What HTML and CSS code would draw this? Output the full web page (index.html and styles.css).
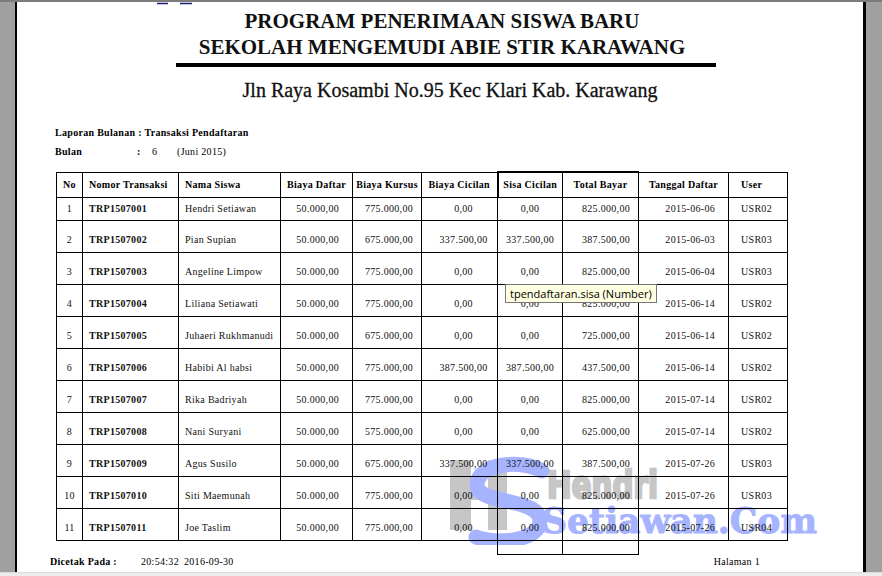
FILE: index.html
```html
<!DOCTYPE html>
<html lang="id">
<head>
<meta charset="utf-8">
<title>Laporan Bulanan Transaksi Pendaftaran</title>
<link rel="stylesheet" href="styles.css">
</head>
<body>
<div class="viewer">
  <div class="strip strip-left"></div>
  <main class="page">
    <svg class="logo-cut" width="40" height="3" viewBox="0 0 40 3"><path d="M0 1.5 H11 M23 1.5 H35" stroke="#1c1c7a" stroke-width="1.6"/></svg>
    <header class="head">
      <h1 class="title"><span class="title-line">PROGRAM PENERIMAAN SISWA BARU</span><span class="title-line">SEKOLAH MENGEMUDI ABIE STIR KARAWANG</span></h1>
      <div class="rule"></div>
      <p class="addr">Jln Raya Kosambi No.95 Kec Klari Kab. Karawang</p>
    </header>
    <section class="meta">
      <div class="meta-line bold">Laporan Bulanan : Transaksi Pendaftaran</div>
      <div class="meta-line"><span class="m-label bold">Bulan</span><span class="m-colon bold">:</span><span class="m-val">6</span><span class="m-note">(Juni 2015)</span></div>
    </section>
    <div class="table-wrap">
      <svg class="watermark" width="380" height="90" viewBox="0 0 380 90">
        <rect x="4" y="5" width="21" height="70" fill="#c6c6c6"/>
        <rect x="42" y="5" width="19" height="70" fill="#c6c6c6"/>
        <rect x="25" y="33" width="17" height="12" fill="#c6c6c6"/>
        <text x="101" y="43" class="wm-hendri" textLength="111" lengthAdjust="spacingAndGlyphs">Hendri</text>
        <path d="M96 16 C76 4 31 8 31 30 C31 50 94 42 94 66 C94 86 50 90 30 82" fill="none" stroke="#a6b4ff" stroke-width="15" stroke-linecap="round"/>
        <text x="96" y="78" class="wm-setia" textLength="275" lengthAdjust="spacingAndGlyphs">Setiawan.Com</text>
      </svg>
      <table class="report">
        <colgroup>
          <col class="w26"><col class="w96"><col class="w102"><col class="w72"><col class="w69"><col class="w76"><col class="w65"><col class="w76"><col class="w90"><col class="w59">
        </colgroup>
        <thead>
          <tr><th>No</th><th>Nomor Transaksi</th><th>Nama Siswa</th><th>Biaya Daftar</th><th>Biaya Kursus</th><th>Biaya Cicilan</th><th class="sel sel-left">Sisa Cicilan</th><th class="sel">Total Bayar</th><th>Tanggal Daftar</th><th>User</th></tr>
        </thead>
        <tbody>
          <tr class="first"><td>1</td><td>TRP1507001</td><td>Hendri Setiawan</td><td>50.000,00</td><td>775.000,00</td><td>0,00</td><td>0,00</td><td>825.000,00</td><td>2015-06-06</td><td>USR02</td></tr>
          <tr><td>2</td><td>TRP1507002</td><td>Pian Supian</td><td>50.000,00</td><td>675.000,00</td><td>337.500,00</td><td>337.500,00</td><td>387.500,00</td><td>2015-06-03</td><td>USR03</td></tr>
          <tr><td>3</td><td>TRP1507003</td><td>Angeline Limpow</td><td>50.000,00</td><td>775.000,00</td><td>0,00</td><td>0,00</td><td>825.000,00</td><td>2015-06-04</td><td>USR03</td></tr>
          <tr><td>4</td><td>TRP1507004</td><td>Liliana Setiawati</td><td>50.000,00</td><td>775.000,00</td><td>0,00</td><td>0,00</td><td>825.000,00</td><td>2015-06-14</td><td>USR02</td></tr>
          <tr><td>5</td><td>TRP1507005</td><td>Juhaeri Rukhmanudi</td><td>50.000,00</td><td>675.000,00</td><td>0,00</td><td>0,00</td><td>725.000,00</td><td>2015-06-14</td><td>USR02</td></tr>
          <tr><td>6</td><td>TRP1507006</td><td>Habibi Al habsi</td><td>50.000,00</td><td>775.000,00</td><td>387.500,00</td><td>387.500,00</td><td>437.500,00</td><td>2015-06-14</td><td>USR02</td></tr>
          <tr><td>7</td><td>TRP1507007</td><td>Rika Badriyah</td><td>50.000,00</td><td>775.000,00</td><td>0,00</td><td>0,00</td><td>825.000,00</td><td>2015-07-14</td><td>USR02</td></tr>
          <tr><td>8</td><td>TRP1507008</td><td>Nani Suryani</td><td>50.000,00</td><td>575.000,00</td><td>0,00</td><td>0,00</td><td>625.000,00</td><td>2015-07-14</td><td>USR02</td></tr>
          <tr><td>9</td><td>TRP1507009</td><td>Agus Susilo</td><td>50.000,00</td><td>675.000,00</td><td>337.500,00</td><td>337.500,00</td><td>387.500,00</td><td>2015-07-26</td><td>USR03</td></tr>
          <tr><td>10</td><td>TRP1507010</td><td>Siti Maemunah</td><td>50.000,00</td><td>775.000,00</td><td>0,00</td><td>0,00</td><td>825.000,00</td><td>2015-07-26</td><td>USR03</td></tr>
          <tr><td>11</td><td>TRP1507011</td><td>Joe Taslim</td><td>50.000,00</td><td>775.000,00</td><td>0,00</td><td>0,00</td><td>825.000,00</td><td>2015-07-26</td><td>USR04</td></tr>
          <tr class="sel-foot"><td></td><td></td><td></td><td></td><td></td><td></td><td></td><td></td><td></td><td></td></tr>
        </tbody>
      </table>
      <div class="tooltip">tpendaftaran.sisa (Number)</div>
    </div>
    <footer class="foot">
      <span class="f-label bold">Dicetak Pada :</span>
      <span class="f-time">20:54:32</span>
      <span class="f-date">2016-09-30</span>
      <span class="f-page">Halaman 1</span>
    </footer>
  </main>
  <div class="strip strip-right"></div>
</div>
<div class="statusbar"></div>
</body>
</html>
```

FILE: styles.css
```css
html, body {
  margin: 0;
  padding: 0;
}
body {
  width: 882px;
  height: 576px;
  overflow: hidden;
  background: #ffffff;
  font-family: "Liberation Serif", "Times New Roman", serif;
  color: #000;
}
.viewer {
  display: flex;
  height: 570px;
  border-top: 2px solid #7c7c7c;
}
.strip {
  background: #a0a0a0;
}
.strip-left {
  width: 15px;
  border-right: 2px solid #000;
}
.strip-right {
  width: 16px;
  border-left: 3px solid #000;
}
.page {
  width: 846px;
  position: relative;
  background: #fff;
  overflow: hidden;
}
.logo-cut {
  position: absolute;
  left: 140px;
  top: 0;
}
.statusbar {
  height: 3px;
  background: #ececec;
  border-top: 1px solid #dadada;
}
.bold { font-weight: bold; }

/* header */
.head {
  display: flex;
  flex-direction: column;
}
.title {
  margin: 6px 0 0 0;
  padding-left: 4px;
  display: flex;
  flex-direction: column;
  align-items: center;
  font-family: "Liberation Serif", serif;
  font-weight: bold;
  font-size: 21px;
  line-height: 26px;
  color: #111;
}
.rule {
  margin: 3px 0 0 159px;
  width: 540px;
  height: 4px;
  background: #000;
}
.addr {
  margin: 11px 0 0 0;
  padding-left: 20px;
  text-align: center;
  font-size: 20px;
  line-height: 24px;
  color: #111;
  -webkit-text-stroke: 0.3px #111;
}

/* meta */
.meta {
  margin: 24px 0 0 38px;
  font-size: 10px;
  line-height: 14px;
  letter-spacing: 0.3px;
}
.meta-line + .meta-line { margin-top: 5px; }
.meta-line { display: flex; }
.m-label { width: 82px; }
.m-colon { width: 15px; }
.m-val { width: 25px; }

/* table */
.table-wrap {
  position: relative;
  margin: 12px 0 0 39px;
  width: 732px;
}
.watermark {
  position: absolute;
  left: 390px;
  top: 284px;
  z-index: 0;
}
.wm-hendri {
  font-family: "DejaVu Sans", sans-serif;
  font-weight: bold;
  font-size: 37px;
  fill: #c6c6c6;
  stroke: #c6c6c6;
  stroke-width: 2.5px;
}
.wm-setia {
  font-family: "DejaVu Serif", serif;
  font-weight: bold;
  font-size: 36px;
  fill: #a6b4ff;
  stroke: #a6b4ff;
  stroke-width: 1px;
}
.report {
  position: relative;
  z-index: 1;
  border-collapse: collapse;
  table-layout: fixed;
  width: 732px;
  font-size: 10px;
  letter-spacing: 0.3px;
  background: transparent;
}
.w26 { width: 26px; }
.w96 { width: 96px; }
.w102 { width: 102px; }
.w72 { width: 72px; }
.w69 { width: 69px; }
.w76 { width: 76px; }
.w65 { width: 65px; }
.w90 { width: 90px; }
.w59 { width: 59px; }
.report th,
.report td {
  border: 1px solid #000;
  padding: 0;
  white-space: nowrap;
  overflow: hidden;
  vertical-align: middle;
}
.report thead tr { height: 25px; }
.report th {
  font-weight: bold;
  text-align: center;
}
.report th:nth-child(2),
.report th:nth-child(3) { text-align: left; padding-left: 6px; }
.report th:nth-child(10) { text-align: left; padding-left: 12px; }
.report th.sel { border-top-width: 2px; }
.report th.sel-left { border-left-width: 2px; }

.report tbody tr { height: 32px; }
.report tbody tr.first { height: 23px; }
.report tbody tr td { padding-top: 7px; color: #111; }
.report tbody tr.first td { padding-top: 0; }
.report td:nth-child(1) { text-align: center; }
.report td:nth-child(2) { text-align: left; padding-left: 6px; font-weight: bold; }
.report td:nth-child(3) { text-align: left; padding-left: 6px; }
.report td:nth-child(4) { text-align: right; padding-right: 13px; }
.report td:nth-child(5) { text-align: right; padding-right: 8px; }
.report td:nth-child(6) { text-align: center; padding-left: 8px; }
.report td:nth-child(7) { text-align: center; }
.report td:nth-child(8) { text-align: right; padding-right: 8px; }
.report td:nth-child(9) { text-align: right; padding-right: 13px; }
.report td:nth-child(10) { text-align: left; padding-left: 12px; }

.report tbody tr.sel-foot { height: 14px; }
.report tbody tr.sel-foot td { border: none; padding: 0; }
.report tbody tr.sel-foot td:nth-child(7),
.report tbody tr.sel-foot td:nth-child(8) { border: 1px solid #000; }

.tooltip {
  position: absolute;
  z-index: 2;
  left: 449px;
  top: 113px;
  box-sizing: border-box;
  width: 152px;
  height: 19px;
  padding: 0 4px;
  background: #ffffe1;
  border: 1px solid #767676;
  font-family: "Open Sans", "Noto Sans", sans-serif;
  font-size: 11px;
  line-height: 17px;
  color: #000;
  white-space: nowrap;
}

/* footer */
.foot {
  display: flex;
  margin: 0 0 0 33px;
  font-size: 10px;
  line-height: 14px;
  letter-spacing: 0.3px;
}
.f-label { width: 91px; }
.f-time { width: 43px; }
.f-date { flex: 1; }
.f-page { padding-right: 103px; }
```
